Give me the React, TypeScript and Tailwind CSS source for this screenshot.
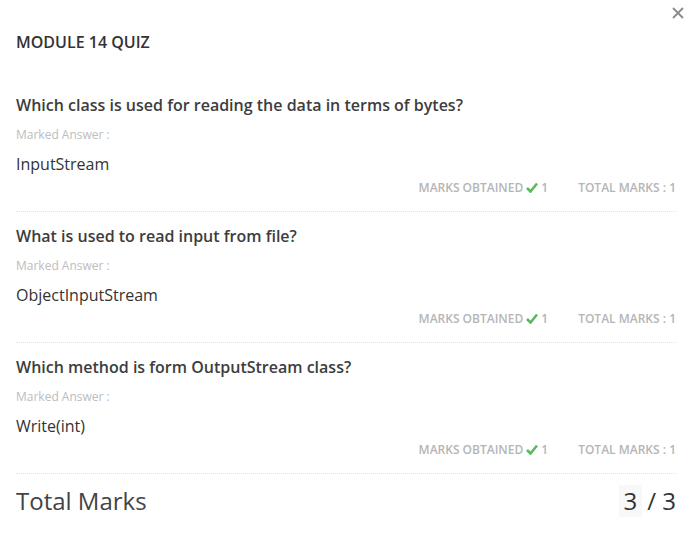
import React from "react";

const questions = [
  { q: "Which class is used for reading the data in terms of bytes?", a: "InputStream" },
  { q: "What is used to read input from file?", a: "ObjectInputStream" },
  { q: "Which method is form OutputStream class?", a: "Write(int)" },
];

const Check = () => (
  <svg width="12" height="11" viewBox="0 0 12 11" className="inline-block mx-[3px] -mt-[3px]">
    <path d="M1 6 L4.5 9.5 L11 1.5" fill="none" stroke="#5cb85c" strokeWidth="2.6" strokeLinejoin="miter" />
  </svg>
);

const App = () => {
  return (
    <div className="relative w-[693px] h-[544px] bg-white px-4 pr-[17px] font-['Open_Sans',sans-serif] text-[#333]">
      <button className="absolute right-[5px] top-[3px] w-5 h-5 flex items-center justify-center">
        <svg width="12" height="12" viewBox="0 0 12 12">
          <path d="M1 1 L11 11 M11 1 L1 11" stroke="#8a8a8a" strokeWidth="1.8" />
        </svg>
      </button>

      <h2 className="pt-[32px] text-[16px] leading-5 font-semibold text-[#333]">MODULE 14 QUIZ</h2>

      <div className="mt-[43px]">
        {questions.map((item, i) => (
          <div key={i} className={i > 0 ? "border-t border-dotted border-[#e2e2e2] pt-[14px]" : ""}>
            <p className="text-[16px] leading-5 font-semibold text-[#3d3d3d]">{item.q}</p>
            <p className="mt-[12px] text-[12px] leading-4 text-[#bdbdbd]">Marked Answer :</p>
            <p className="mt-[10px] text-[16px] leading-[22px] text-[#333]">{item.a}</p>
            <div className="mt-[6px] pb-[16px] flex justify-end items-center gap-[30px] text-[12px] leading-[14px] font-semibold text-[#b5b5b5]">
              <span>
                MARKS OBTAINED
                <Check />1
              </span>
              <span>TOTAL MARKS : 1</span>
            </div>
          </div>
        ))}
        <div className="border-t border-dotted border-[#e2e2e2] pt-[11px] flex justify-between items-center">
          <span className="text-[24px] leading-8 text-[#444]">Total Marks</span>
          <span className="flex items-center text-[24px] leading-8 font-medium text-[#333]">
            <span className="bg-[#f8f8f8] px-[5px]">3</span>
            <span className="ml-[5px]">/ 3</span>
          </span>
        </div>
      </div>
    </div>
  );
};

export default App;
